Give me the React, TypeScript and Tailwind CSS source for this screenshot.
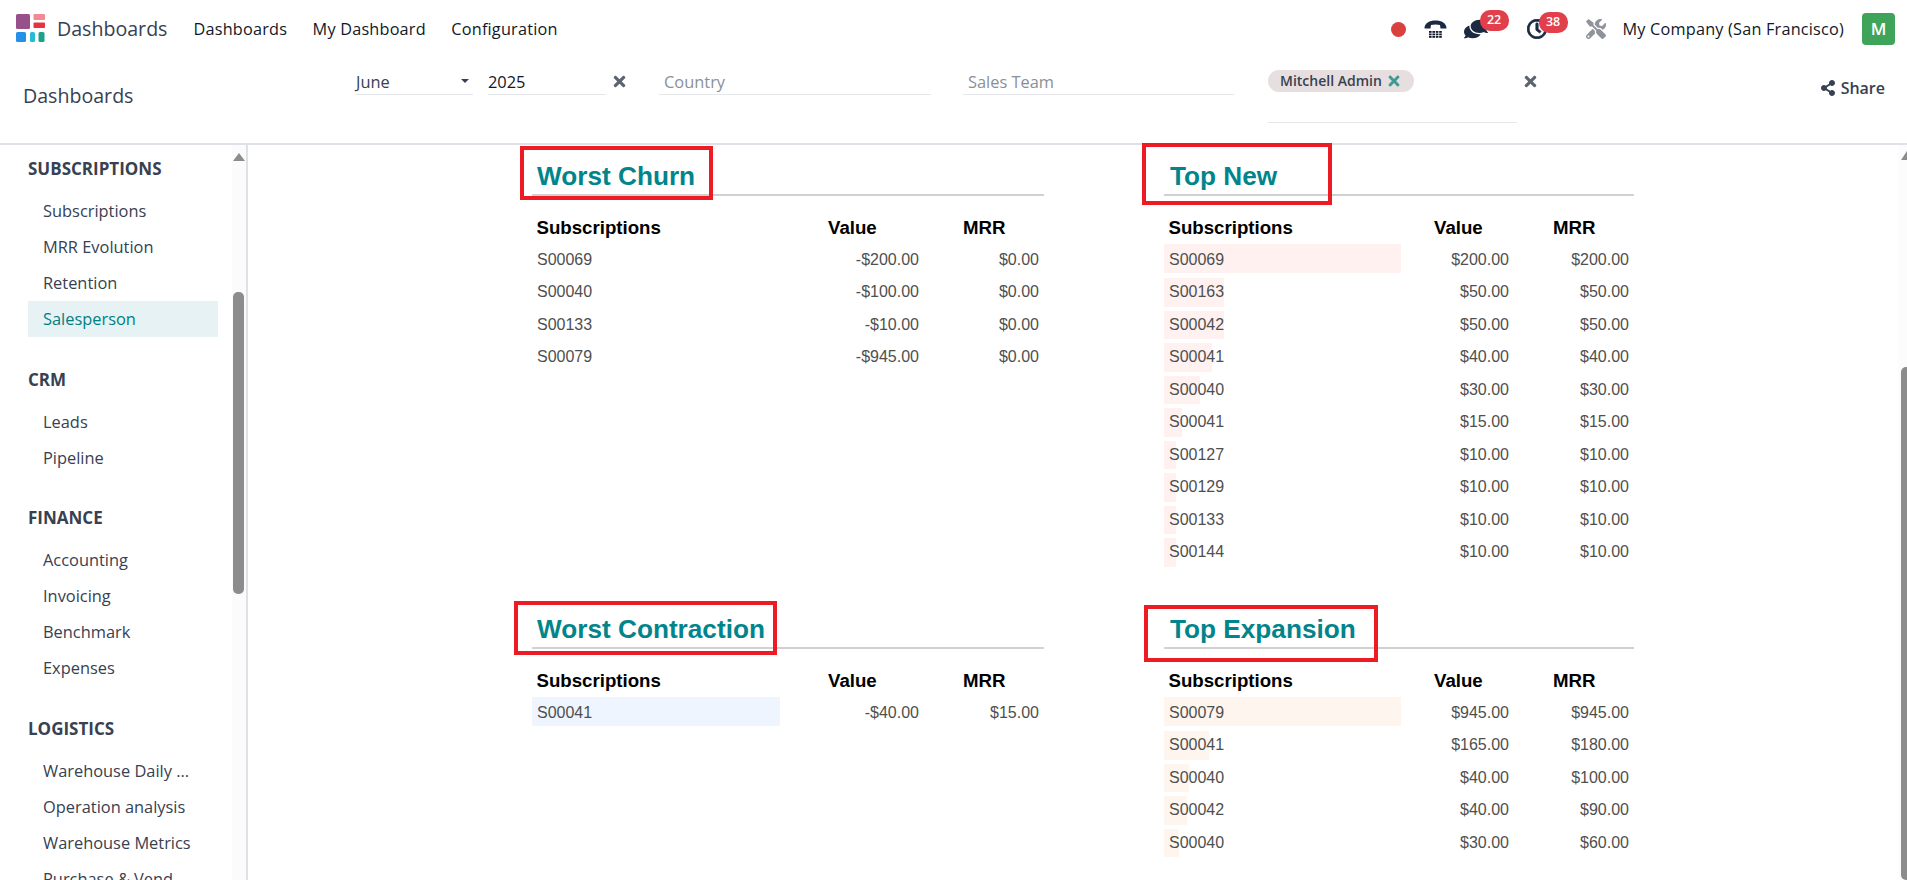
import React from "react";
import { FaComments, FaRegClock, FaShareAlt, FaTimes, FaTools } from "react-icons/fa";

type Row = { name: string; value: string; mrr: string; bar?: number };

const font = "font-['Open_Sans','Noto_Sans',sans-serif]";

const worstChurn: Row[] = [
  { name: "S00069", value: "-$200.00", mrr: "$0.00" },
  { name: "S00040", value: "-$100.00", mrr: "$0.00" },
  { name: "S00133", value: "-$10.00", mrr: "$0.00" },
  { name: "S00079", value: "-$945.00", mrr: "$0.00" },
];

const topNew: Row[] = [
  { name: "S00069", value: "$200.00", mrr: "$200.00", bar: 237 },
  { name: "S00163", value: "$50.00", mrr: "$50.00", bar: 60 },
  { name: "S00042", value: "$50.00", mrr: "$50.00", bar: 60 },
  { name: "S00041", value: "$40.00", mrr: "$40.00", bar: 48 },
  { name: "S00040", value: "$30.00", mrr: "$30.00", bar: 36 },
  { name: "S00041", value: "$15.00", mrr: "$15.00", bar: 18 },
  { name: "S00127", value: "$10.00", mrr: "$10.00", bar: 12 },
  { name: "S00129", value: "$10.00", mrr: "$10.00", bar: 12 },
  { name: "S00133", value: "$10.00", mrr: "$10.00", bar: 12 },
  { name: "S00144", value: "$10.00", mrr: "$10.00", bar: 12 },
];

const worstContraction: Row[] = [{ name: "S00041", value: "-$40.00", mrr: "$15.00", bar: 248 }];

const topExpansion: Row[] = [
  { name: "S00079", value: "$945.00", mrr: "$945.00", bar: 237 },
  { name: "S00041", value: "$165.00", mrr: "$180.00", bar: 45 },
  { name: "S00040", value: "$40.00", mrr: "$100.00", bar: 25 },
  { name: "S00042", value: "$40.00", mrr: "$90.00", bar: 23 },
  { name: "S00040", value: "$30.00", mrr: "$60.00", bar: 15 },
];

const menu = [
  { title: "SUBSCRIPTIONS", items: ["Subscriptions", "MRR Evolution", "Retention", "Salesperson"] },
  { title: "CRM", items: ["Leads", "Pipeline"] },
  { title: "FINANCE", items: ["Accounting", "Invoicing", "Benchmark", "Expenses"] },
  { title: "LOGISTICS", items: ["Warehouse Daily ...", "Operation analysis", "Warehouse Metrics", "Purchase & Vend..."] },
];

const Logo = () => (
  <svg width="29" height="28" viewBox="0 0 29 28" className="-mt-[2px] shrink-0">
    <rect x="0" y="0" width="14" height="15" rx="1.5" fill="#98508c" />
    <rect x="17.5" y="0" width="11.5" height="6" rx="1" fill="#f08a94" />
    <rect x="17.5" y="8.5" width="11.5" height="5.5" rx="1" fill="#e5343f" />
    <rect x="0" y="18" width="10" height="10" rx="1.5" fill="#2590e8" />
    <rect x="14" y="18" width="5" height="10" rx="1.5" fill="#27bcd6" />
    <rect x="22.5" y="18" width="6" height="10" rx="1.5" fill="#1ba289" />
  </svg>
);

const PhoneIcon = () => (
  <svg width="23" height="19" viewBox="0 0 23 19">
    <path d="M0.5 8.5C0.5 3 5.5 0.5 11.5 0.5S22.5 3 22.5 8.5L16.5 8.5L16 5C13.5 4.3 9.5 4.3 7 5L6.5 8.5Z" fill="#1b2a41" />
    {[11, 13.5, 16].map((y) =>
      [5, 8.4, 11.8, 15.2].map((x) => <rect key={`${x}-${y}`} x={x} y={y} width="2.6" height="1.8" fill="#111827" />)
    )}
  </svg>
);

const Badge = ({ n }: { n: string }) => (
  <span className="absolute right-[-21px] top-[-7px] flex h-[21px] w-[29px] items-center justify-center rounded-[10px] bg-[#e13f4c] text-[12.5px] font-semibold text-white">
    {n}
  </span>
);

const Underlined = ({ children, width, className }: { children: React.ReactNode; width: string; className?: string }) => (
  <div className={`flex h-[27px] items-center border-b border-[#e5e7eb] pt-[2px] text-[16.4px] ${width} ${className ?? ""}`}>
    {children}
  </div>
);

const Section = ({
  title,
  rows,
  nameCol,
  valueCol,
  barColor,
  marker,
  titlePad,
}: {
  title: string;
  rows: Row[];
  nameCol: string;
  valueCol: string;
  barColor: string;
  marker: string;
  titlePad: string;
}) => (
  <section className="relative">
    <div className={`absolute border-[4px] border-[#ed1c24] ${marker}`} />
    <h2 className={`h-[51px] border-b-2 border-[#d1d1d1] text-[26.2px] font-bold leading-[31px] text-[#01858b] ${titlePad}`}>
      {title}
    </h2>
    <div className="flex h-[47.5px] items-center pt-[17px] text-[18.67px] font-bold text-black">
      <div className={`${nameCol} pl-[4.5px]`}>Subscriptions</div>
      <div className={`${valueCol} pl-[4px]`}>Value</div>
      <div className="ml-[35px] w-[85px] pl-[4px]">MRR</div>
    </div>
    {rows.map((row, i) => (
      <div key={i} className="flex h-[32.5px] items-center text-[16px] text-[#4f4f4f]">
        <div className={`relative h-full ${nameCol}`}>
          {row.bar && (
            <div
              className={`absolute left-0 ${i === 0 ? "top-0 bottom-[3px]" : "top-[2px] bottom-[2px]"} ${barColor}`}
              style={{ width: row.bar }}
            />
          )}
          <span className="relative flex h-full items-center pl-[5px]">{row.name}</span>
        </div>
        <div className={`${valueCol} pr-[5px] text-right`}>{row.value}</div>
        <div className="ml-[35px] w-[85px] pr-[5px] text-right">{row.mrr}</div>
      </div>
    ))}
  </section>
);

export default function App() {
  return (
    <div className={`flex h-[880px] flex-col overflow-hidden bg-white text-[#374151] ${font}`}>
      <nav className="flex h-[58px] shrink-0 items-center pl-[16px] pr-[12px] text-[#111827]">
        <Logo />
        <span className="ml-[12px] text-[19.6px] text-[#374151]">Dashboards</span>
        <div className="ml-[26px] flex gap-[25.5px] text-[16.25px] tracking-[0.2px]">
          <span>Dashboards</span>
          <span>My Dashboard</span>
          <span>Configuration</span>
        </div>
        <div className="ml-auto flex items-center">
          <span className="h-[15px] w-[15px] rounded-full bg-[#d9413f]" />
          <span className="ml-[18px] flex">
            <PhoneIcon />
          </span>
          <span className="relative ml-[17px] text-[#1b2a41]">
            <FaComments size={24} className="-scale-x-100" />
            <Badge n="22" />
          </span>
          <span className="relative ml-[39px] text-[#1b2a41]">
            <FaRegClock size={20} stroke="currentColor" strokeWidth={22} />
            <Badge n="38" />
          </span>
          <span className="ml-[39px] text-[#8f939c]">
            <FaTools size={20} />
          </span>
          <span className="ml-[17px] text-[16.25px] tracking-[0.2px]">My Company (San Francisco)</span>
          <span className="ml-[18px] flex h-[32px] w-[33px] items-center justify-center rounded-[4px] bg-[#3fa45a] text-[17px] font-semibold text-white">
            M
          </span>
        </div>
      </nav>

      <header className="relative flex h-[87px] shrink-0 border-b-2 border-[#dee2e6] pl-[23px] pr-[22px]">
        <div className="w-[333px] pt-[23px] text-[19.6px] leading-[30px]">Dashboards</div>
        <div className="flex items-start pt-[10px]">
          <Underlined width="w-[117px]" className="relative">
            June
            <span className="absolute right-[4px] top-[11px] h-0 w-0 border-x-[4px] border-t-[4px] border-x-transparent border-t-[#374151]" />
          </Underlined>
          <Underlined width="w-[118px]" className="ml-[15px] text-[#111827]">
            2025
          </Underlined>
          <FaTimes size={17} className="ml-[4.5px] mt-[4.5px] text-[#5c6470]" />
          <Underlined width="w-[272px]" className="ml-[31.5px] pl-[5px] text-[#8a9097]">
            Country
          </Underlined>
          <Underlined width="w-[271px]" className="ml-[32px] pl-[5px] text-[#8a9097]">
            Sales Team
          </Underlined>
          <div className="ml-[34px] h-[55px] w-[249px] border-b border-[#e5e7eb]">
            <span className="inline-flex h-[22px] w-[146px] items-center rounded-full bg-[#e7dfdf] pl-[12px] text-[14px] font-semibold text-[#374151]">
              Mitchell Admin
              <FaTimes size={16} className="ml-[4px] text-[#3f9a94]" />
            </span>
          </div>
          <FaTimes size={17} className="ml-[4.5px] mt-[4.5px] text-[#5c6470]" />
        </div>
        <div className="ml-auto flex items-start gap-[5px] pt-[19px] text-[16px] font-semibold leading-[22px]">
          <FaShareAlt size={16} className="mt-[3px]" />
          Share
        </div>
      </header>

      <div className="flex min-h-0 flex-1">
        <aside className="relative w-[248px] shrink-0 overflow-hidden border-r-2 border-[#dee2e6] pl-[28px] pt-[9px]">
          <div className="absolute bottom-0 right-0 top-0 w-[14px] bg-[#fbfbfb]">
            <span className="absolute left-[1px] top-[8px] h-0 w-0 border-x-[6px] border-b-[8px] border-x-transparent border-b-[#8c8c8c]" />
            <span className="absolute left-[1px] top-[147px] h-[302px] w-[11px] rounded-[5px] bg-[#8c8c8c]" />
          </div>
          {menu.map((group) => (
            <div key={group.title} className="mb-[27.5px]">
              <div className="h-[30px] text-[17px] font-bold leading-[30px]">{group.title}</div>
              <ul className="mt-[9px] w-[190px]">
                {group.items.map((item) => (
                  <li
                    key={item}
                    className={`h-[36px] pl-[15px] text-[16.4px] leading-[36px] ${
                      item === "Salesperson" ? "bg-[#e6f2f3] text-[#017e84]" : ""
                    }`}
                  >
                    {item}
                  </li>
                ))}
              </ul>
            </div>
          ))}
        </aside>

        <main className="relative min-w-0 flex-1 font-['Liberation_Sans',Arial,sans-serif]">
          <div className="absolute bottom-0 right-0 top-0 w-[9px] bg-[#fcfcfc]">
            <span className="absolute left-[3px] top-[6px] h-0 w-0 border-x-[6px] border-b-[9px] border-x-transparent border-b-[#8c8c8c]" />
            <span className="absolute left-[3px] top-[222px] bottom-0 w-[12px] rounded-[5px] bg-[#8c8c8c]" />
          </div>
          <div className="ml-[284px] grid w-[1102px] grid-cols-[512px_470px] gap-x-[120px]">
            <div className="h-[453px]">
              <Section
                title="Worst Churn"
                rows={worstChurn}
                nameCol="w-[292px]"
                valueCol="w-[100px]"
                barColor="bg-[#eef5fe]"
                marker="left-[-12px] top-[1px] h-[54px] w-[193px]"
                titlePad="pl-[5px] pt-[15.5px]"
              />
            </div>
            <div>
              <Section
                title="Top New"
                rows={topNew}
                nameCol="w-[266px]"
                valueCol="w-[84px]"
                barColor="bg-[#fef1f0]"
                marker="left-[-22px] top-[-2px] h-[62px] w-[190px]"
                titlePad="pl-[6px] pt-[16px]"
              />
            </div>
            <div>
              <Section
                title="Worst Contraction"
                rows={worstContraction}
                nameCol="w-[292px]"
                valueCol="w-[100px]"
                barColor="bg-[#eef5fe]"
                marker="left-[-18px] top-[3px] h-[54px] w-[263px]"
                titlePad="pl-[5px] pt-[16px]"
              />
            </div>
            <div>
              <Section
                title="Top Expansion"
                rows={topExpansion}
                nameCol="w-[266px]"
                valueCol="w-[84px]"
                barColor="bg-[#fef5ee]"
                marker="left-[-20px] top-[7px] h-[57px] w-[234px]"
                titlePad="pl-[6px] pt-[16px]"
              />
            </div>
          </div>
        </main>
      </div>
    </div>
  );
}
